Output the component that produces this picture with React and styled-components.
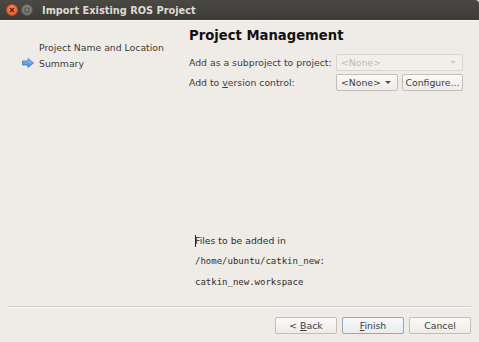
import React from "react";
import styled, { createGlobalStyle } from "styled-components";

const GlobalStyle = createGlobalStyle`
  html, body {
    margin: 0;
    padding: 0;
    background: #efebe7;
  }
  body {
    font-family: "DejaVu Sans", "Open Sans", sans-serif;
    font-size: 9.3px;
    color: #3c3c3c;
  }
`;

const Window = styled.div`
  width: 479px;
  height: 342px;
  display: flex;
  flex-direction: column;
  background: #efebe7;
  overflow: hidden;
`;

const TitleBar = styled.div`
  height: 20px;
  display: flex;
  align-items: center;
  padding-left: 6px;
  background: linear-gradient(#4a4944, #3b3a36);
  border-bottom: 1px solid #f7f5f2;
  border-top-right-radius: 4px;
`;

const WinButton = styled.span`
  width: 12px;
  height: 12px;
  border-radius: 50%;
  margin-right: 3px;
  display: flex;
  align-items: center;
  justify-content: center;
  box-sizing: border-box;
  background: ${(p) =>
    p.$close
      ? "radial-gradient(circle at 50% 35%, #f68d5f, #e55b23)"
      : "radial-gradient(circle at 50% 35%, #8b8984, #6e6c67)"};
  border: 1px solid ${(p) => (p.$close ? "#c44a1a" : "#5a5853")};
`;

const Title = styled.span`
  margin-left: 6px;
  color: #dfdbd2;
  font-weight: bold;
  font-size: 9.8px;
`;

const Body = styled.div`
  flex: 1;
  display: flex;
`;

const Sidebar = styled.ul`
  list-style: none;
  margin: 0;
  padding: 18px 0 0 22px;
  width: 168px;
  box-sizing: border-box;
`;

const Step = styled.li`
  display: flex;
  align-items: center;
  height: 16px;
  padding-left: ${(p) => (p.$current ? 0 : 17)}px;
  gap: 5px;
  color: #3c3c3c;
`;

const Main = styled.div`
  flex: 1;
  display: flex;
  flex-direction: column;
  padding: 6px 16px 0 22px;
`;

const Heading = styled.h1`
  margin: 0;
  font-size: 13.2px;
  font-weight: bold;
  color: #111;
  height: 17px;
  line-height: 17px;
`;

const Form = styled.div`
  margin-top: 10px;
  display: grid;
  grid-template-columns: 147px 1fr;
  row-gap: 3px;
  align-items: center;
`;

const Label = styled.span`
  color: #3c3c3c;
  u {
    text-decoration: underline;
  }
`;

const Controls = styled.div`
  display: flex;
  gap: 4px;
`;

const Combo = styled.div`
  height: 17px;
  box-sizing: border-box;
  width: ${(p) => p.$width}px;
  display: flex;
  align-items: center;
  justify-content: space-between;
  padding: 0 6px 0 4px;
  border: 1px solid ${(p) => (p.$disabled ? "#d9d5d0" : "#c3beb8")};
  border-radius: 2px;
  background: ${(p) =>
    p.$disabled ? "#f2efeb" : "linear-gradient(#fbfaf9, #eeebe8)"};
  color: ${(p) => (p.$disabled ? "#bdb9b4" : "#3c3c3c")};
`;

const Caret = styled.span`
  width: 0;
  height: 0;
  border-left: 3px solid transparent;
  border-right: 3px solid transparent;
  border-top: 3px solid ${(p) => (p.$disabled ? "#cfcbc6" : "#4c4c4c")};
`;

const Button = styled.button`
  height: ${(p) => p.$height || 17}px;
  width: ${(p) => p.$width}px;
  box-sizing: border-box;
  padding: 0;
  font: inherit;
  color: #3c3c3c;
  border: 1px solid ${(p) => (p.$focused ? "#8fa9c4" : "#c3beb8")};
  border-radius: 2px;
  background: ${(p) =>
    p.$focused
      ? "linear-gradient(#f7f9fb, #e8ecef)"
      : "linear-gradient(#fbfaf9, #eeebe8)"};
  u {
    text-decoration: underline;
  }
`;

const Files = styled.div`
  margin-top: 139px;
  margin-left: 6px;
  display: flex;
  flex-direction: column;
`;

const FileLine = styled.div`
  height: 21px;
  line-height: 21px;
  color: #2e2e2e;
  font-family: ${(p) =>
    p.$mono ? '"DejaVu Sans Mono", "Liberation Mono", monospace' : "inherit"};
  font-size: ${(p) => (p.$mono ? "9px" : "9.3px")};
  display: flex;
  align-items: center;
`;

const TextCursor = styled.span`
  display: inline-block;
  width: 1px;
  height: 12px;
  background: #222;
  margin-right: -1px;
`;

const Footer = styled.div`
  padding: 0 8px 8px 8px;
`;

const Separator = styled.div`
  height: 1px;
  background: #d2cec9;
  border-bottom: 1px solid #fbfaf9;
  margin-bottom: 9px;
`;

const ButtonRow = styled.div`
  display: flex;
  justify-content: flex-end;
  gap: 5px;
`;

const StepArrow = () => (
  <svg width="12" height="10" viewBox="0 0 12 10">
    <defs>
      <linearGradient id="ar" x1="0" y1="0" x2="0" y2="1">
        <stop offset="0" stopColor="#9cc6f2" />
        <stop offset="1" stopColor="#3f86d6" />
      </linearGradient>
    </defs>
    <path
      d="M0.5 3 H6 V0.5 L11.5 5 L6 9.5 V7 H0.5 Z"
      fill="url(#ar)"
      stroke="#3a7ac4"
      strokeWidth="0.8"
      strokeLinejoin="round"
    />
  </svg>
);

const CloseGlyph = () => (
  <svg width="6" height="6" viewBox="0 0 6 6">
    <path d="M1 1 L5 5 M5 1 L1 5" stroke="#5a1d05" strokeWidth="1.3" />
  </svg>
);

const MinGlyph = () => (
  <svg width="6" height="6" viewBox="0 0 6 6">
    <rect x="1" y="1" width="4" height="4" fill="none" stroke="#4f4d49" strokeWidth="1" />
  </svg>
);

export default function App() {
  return (
    <>
      <GlobalStyle />
      <Window>
        <TitleBar>
          <WinButton $close>
            <CloseGlyph />
          </WinButton>
          <WinButton>
            <MinGlyph />
          </WinButton>
          <Title>Import Existing ROS Project</Title>
        </TitleBar>
        <Body>
          <Sidebar>
            <Step>Project Name and Location</Step>
            <Step $current>
              <StepArrow />
              Summary
            </Step>
          </Sidebar>
          <Main>
            <Heading>Project Management</Heading>
            <Form>
              <Label>Add as a subproject to project:</Label>
              <Controls>
                <Combo $width={127} $disabled>
                  &lt;None&gt;
                  <Caret $disabled />
                </Combo>
              </Controls>
              <Label>
                Add to <u>v</u>ersion control:
              </Label>
              <Controls>
                <Combo $width={62}>
                  &lt;None&gt;
                  <Caret />
                </Combo>
                <Button $width={61}>Configure...</Button>
              </Controls>
            </Form>
            <Files>
              <FileLine>
                <TextCursor />
                Files to be added in
              </FileLine>
              <FileLine $mono>/home/ubuntu/catkin_new:</FileLine>
              <FileLine $mono>catkin_new.workspace</FileLine>
            </Files>
          </Main>
        </Body>
        <Footer>
          <Separator />
          <ButtonRow>
            <Button $width={62}>
              &lt; <u>B</u>ack
            </Button>
            <Button $width={62} $focused>
              <u>F</u>inish
            </Button>
            <Button $width={62}>Cancel</Button>
          </ButtonRow>
        </Footer>
      </Window>
    </>
  );
}
